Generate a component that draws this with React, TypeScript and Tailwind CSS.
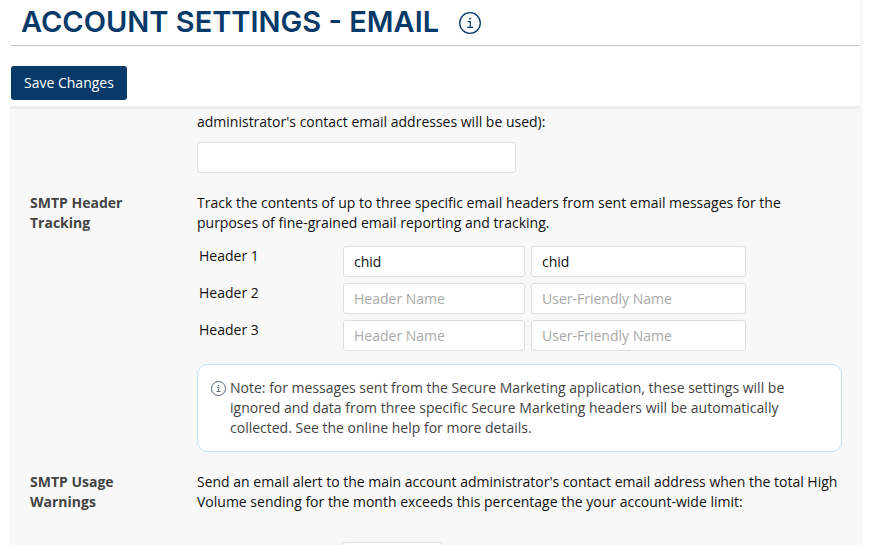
import React, { useState } from 'react';

interface HeaderRow {
  name: string;
  friendlyName: string;
}

interface SettingSectionProps {
  title?: string;
  children: React.ReactNode;
}

const initialHeaders: HeaderRow[] = [
  { name: 'chid', friendlyName: 'chid' },
  { name: '', friendlyName: '' },
  { name: '', friendlyName: '' },
];

const inputClass =
  'h-[31px] min-w-0 rounded-[3px] border border-[#dedede] bg-white px-2.5 text-sm text-[#111] placeholder:text-[#a9a9a9] focus:outline-none focus:border-[#083a69]';

function InfoIcon({ className }: { className: string }) {
  return (
    <svg className={className} viewBox="0 0 22 22" fill="none" aria-hidden="true">
      <circle cx="11" cy="11" r="10.3" stroke="currentColor" strokeWidth="1.3" />
      <path d="M8.7 9.6h2.6v5.6M8.2 15.4h5.8" stroke="currentColor" strokeWidth="1.2" />
      <rect x="10.2" y="5.8" width="1.7" height="1.7" fill="currentColor" />
    </svg>
  );
}

function SettingSection({ title, children }: SettingSectionProps) {
  return (
    <section className="flex">
      <div className="w-[167px] shrink-0 pr-10">
        {title && <h2 className="font-bold text-[#444]">{title}</h2>}
      </div>
      <div className="min-w-0 flex-1">{children}</div>
    </section>
  );
}

export default function App() {
  const [alertEmails, setAlertEmails] = useState('');
  const [headers, setHeaders] = useState<HeaderRow[]>(initialHeaders);
  const [usagePercent, setUsagePercent] = useState('');

  const updateHeader = (index: number, field: keyof HeaderRow, value: string) => {
    setHeaders(prev => prev.map((row, i) => (i === index ? { ...row, [field]: value } : row)));
  };

  return (
    <div className="h-screen overflow-hidden bg-white pl-2.5 pr-[22px] font-['Open_Sans',sans-serif] text-sm leading-5 text-[#111]">
      <form
        className="flex h-full flex-col bg-[#f8f8f8]"
        onSubmit={(e) => e.preventDefault()}
      >
        {/* Page Header */}
        <header className="mr-0.5 shrink-0 border-b-[3px] border-[#ededed] bg-white">
          <div className="mx-px flex h-[46px] items-center gap-5 border-b border-[#c0c0c0] pl-2.5">
            <h1 className="pb-0.5 font-['Inter',sans-serif] text-[29px] font-semibold leading-8 text-[#083a69]">
              ACCOUNT SETTINGS - EMAIL
            </h1>
            <button type="button" aria-label="About email settings" className="text-[#083a69]">
              <InfoIcon className="h-[22px] w-[22px]" />
            </button>
          </div>
          <div className="px-px pb-1.5 pt-5">
            <button
              type="submit"
              className="block h-[34px] rounded-[3px] bg-[#083a69] px-[13px] text-sm text-white hover:bg-[#0b4a85]"
            >
              Save Changes
            </button>
          </div>
        </header>

        {/* Settings */}
        <main className="min-h-0 flex-1 space-y-5 overflow-hidden px-5 pt-[3px]">
          <SettingSection>
            <label htmlFor="alert-emails" className="block">
              administrator's contact email addresses will be used):
            </label>
            <input
              id="alert-emails"
              type="text"
              value={alertEmails}
              onChange={(e) => setAlertEmails(e.target.value)}
              className={`${inputClass} mt-2.5 block w-[319px]`}
            />
          </SettingSection>

          <SettingSection title="SMTP Header Tracking">
            <p>
              Track the contents of up to three specific email headers from sent email messages for the
              purposes of fine-grained email reporting and tracking.
            </p>
            <div className="mt-[13px] space-y-1.5">
              {headers.map((row, i) => (
                <div key={i} className="flex gap-1.5">
                  <label htmlFor={`header-${i}`} className="w-[140px] shrink-0 pl-0.5">
                    Header {i + 1}
                  </label>
                  <input
                    id={`header-${i}`}
                    type="text"
                    value={row.name}
                    placeholder="Header Name"
                    onChange={(e) => updateHeader(i, 'name', e.target.value)}
                    className={`${inputClass} w-[182px]`}
                  />
                  <input
                    type="text"
                    aria-label={`Header ${i + 1} user-friendly name`}
                    value={row.friendlyName}
                    placeholder="User-Friendly Name"
                    onChange={(e) => updateHeader(i, 'friendlyName', e.target.value)}
                    className={`${inputClass} w-[215px]`}
                  />
                </div>
              ))}
            </div>
            <div className="mt-[13px] flex gap-1 rounded-[10px] border border-[#bfe6f3] bg-white p-[13px] text-[#444]">
              <InfoIcon className="mt-[3px] h-[15px] w-[15px] shrink-0 text-[#3c4f66]" />
              <p className="pr-5">
                Note: for messages sent from the Secure Marketing application, these settings will be
                ignored and data from three specific Secure Marketing headers will be automatically
                collected. See the online help for more details.
              </p>
            </div>
          </SettingSection>

          <SettingSection title="SMTP Usage Warnings">
            <label htmlFor="usage-percent" className="block">
              Send an email alert to the main account administrator's contact email address when the total
              High Volume sending for the month exceeds this percentage the your account-wide limit:
            </label>
            <input
              id="usage-percent"
              type="text"
              value={usagePercent}
              onChange={(e) => setUsagePercent(e.target.value)}
              className={`${inputClass} ml-[145px] mt-[30px] block w-[101px]`}
            />
          </SettingSection>
        </main>
      </form>
    </div>
  );
}
